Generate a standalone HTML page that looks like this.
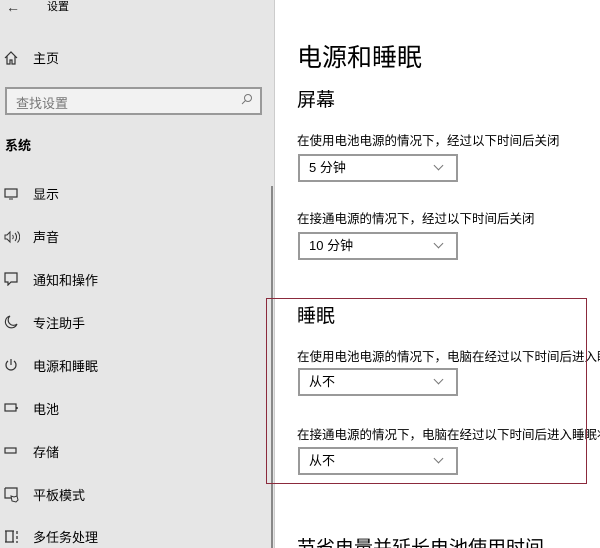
<!DOCTYPE html>
<html><head><meta charset="utf-8"><style>
*{margin:0;padding:0;box-sizing:border-box}
body{width:600px;height:548px;overflow:hidden;position:relative;background:#fff;font-family:"Liberation Sans","Noto Sans CJK SC",sans-serif;color:#000}
.side{position:absolute;left:0;top:0;width:275px;height:548px;background:#e6e6e6;overflow:hidden}
.main{position:absolute;left:275px;top:0;width:325px;height:548px;overflow:hidden}
.a{position:absolute;white-space:nowrap}
.it{position:absolute;left:33px;font-size:13px;line-height:16px}
.ic{position:absolute;left:4px}
.dd{position:absolute;left:23px;width:160px;height:28px;border:2px solid #999;font-size:13px;line-height:24px;padding-left:9px}
.dd::after{content:"";position:absolute;right:14px;top:6px;width:6px;height:6px;border-right:1px solid #777;border-bottom:1px solid #777;transform:rotate(45deg)}
.lb{position:absolute;left:22px;font-size:12.5px;white-space:nowrap}
</style></head><body>
<div class="side">
<div class="a" style="left:6px;top:0;font-size:14px;line-height:14px;color:#333">←</div>
<div class="a" style="left:47px;top:1px;font-size:11px;line-height:13px">设置</div>
<svg class="ic" style="top:51px" width="14" height="14" viewBox="0 0 14 14"><path d="M1 7L7 1l6 6M3 5v8h3v-4h2v4h3V5" fill="none" stroke="#333" stroke-width="1.2"/></svg>
<div class="it" style="top:51px">主页</div>
<div class="a" style="left:5px;top:87px;width:257px;height:28px;border:2px solid #999;background:#f2f2f2"></div>
<div class="a" style="left:16px;top:93px;font-size:13px;color:#777">查找设置</div>
<svg class="a" style="left:241px;top:93px" width="12" height="12"><circle cx="7" cy="5" r="3.5" fill="none" stroke="#777"/><path d="M4.5 7.5L1 11" stroke="#777"/></svg>
<div class="a" style="left:5px;top:135px;font-size:13px;font-weight:bold">系统</div>
<div class="a" style="left:271px;top:186px;width:2px;height:362px;background:#888"></div>
<svg class="ic" style="top:188px" width="14" height="12"><rect x="1" y="1" width="12" height="8" fill="none" stroke="#333" stroke-width="1.2"/><path d="M5 11h4" stroke="#333"/></svg>
<div class="it" style="top:187px">显示</div>
<svg class="ic" style="top:230px" width="16" height="14"><path d="M1 5h2l3-3v10L3 9H1z" fill="none" stroke="#333"/><path d="M8.5 5a3 3 0 0 1 0 4M11 3a6 6 0 0 1 0 8M13.5 1.5a8 8 0 0 1 0 11" fill="none" stroke="#333"/></svg>
<div class="it" style="top:230px">声音</div>
<svg class="ic" style="top:272px" width="14" height="14"><path d="M1 1h12v9H7l-3 3v-3H1z" fill="none" stroke="#333" stroke-width="1.2"/></svg>
<div class="it" style="top:273px">通知和操作</div>
<svg class="ic" style="top:315px" width="14" height="14"><path d="M6 1A6 6 0 1 0 13 9 5 5 0 0 1 6 1z" fill="none" stroke="#333" stroke-width="1.1"/></svg>
<div class="it" style="top:316px">专注助手</div>
<svg class="ic" style="top:358px" width="14" height="14"><path d="M4 3a5 5 0 1 0 6 0M7 1v6" fill="none" stroke="#333" stroke-width="1.2"/></svg>
<div class="it" style="top:359px">电源和睡眠</div>
<svg class="ic" style="top:403px" width="16" height="10"><rect x="1" y="1" width="11" height="7" fill="none" stroke="#333" stroke-width="1.2"/><path d="M13 4v2" stroke="#333" stroke-width="1.5"/></svg>
<div class="it" style="top:402px">电池</div>
<svg class="ic" style="top:447px" width="14" height="8"><rect x="1" y="1" width="11" height="5" fill="none" stroke="#333" stroke-width="1.2"/></svg>
<div class="it" style="top:445px">存储</div>
<svg class="ic" style="top:487px" width="16" height="16"><path d="M1 1h12v8M1 1v10h6" fill="none" stroke="#333" stroke-width="1.2"/><path d="M8 14l-1-5 3 1 3-1 1 4-2 2z" fill="none" stroke="#333"/></svg>
<div class="it" style="top:488px">平板模式</div>
<svg class="ic" style="top:530px" width="16" height="14"><path d="M1 1h9M1 12h9M2 1v11M9 1v11M13 1v3M13 6v3M13 11v2" fill="none" stroke="#333" stroke-width="1.3"/></svg>
<div class="it" style="top:530px">多任务处理</div>
</div>
<div class="a" style="left:274px;top:0;width:1px;height:548px;background:#ccc"></div>
<div class="main">
<div class="a" style="left:22px;top:42px;font-size:25px;line-height:32px">电源和睡眠</div>
<div class="a" style="left:22px;top:89px;font-size:19px;line-height:24px">屏幕</div>
<div class="lb" style="top:130px">在使用电池电源的情况下，经过以下时间后关闭</div>
<div class="dd" style="top:154px">5 分钟</div>
<div class="lb" style="top:208px">在接通电源的情况下，经过以下时间后关闭</div>
<div class="dd" style="top:232px">10 分钟</div>
<div class="a" style="left:22px;top:305px;font-size:19px;line-height:24px">睡眠</div>
<div class="lb" style="top:346px">在使用电池电源的情况下，电脑在经过以下时间后进入睡眠状态</div>
<div class="dd" style="top:368px">从不</div>
<div class="lb" style="top:424px">在接通电源的情况下，电脑在经过以下时间后进入睡眠状态</div>
<div class="dd" style="top:447px">从不</div>
<div class="a" style="left:22px;top:537px;font-size:19px;line-height:24px">节省电量并延长电池使用时间</div>
</div>
<div class="a" style="left:266px;top:298px;width:321px;height:186px;border:1.5px solid #8b2a3c"></div>
</body></html>
